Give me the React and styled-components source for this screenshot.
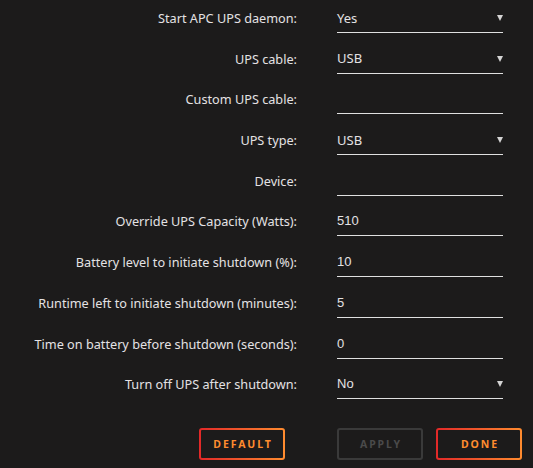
import React from "react";
import styled, { createGlobalStyle } from "styled-components";

const GlobalStyle = createGlobalStyle`
  html, body {
    margin: 0;
    padding: 0;
    background: #1c1b1b;
  }
  body {
    font-family: "Noto Sans", "Open Sans", sans-serif;
    color: #e4e2e4;
  }
`;

const Form = styled.div`
  width: 533px;
  height: 468px;
  padding-top: 4px;
  box-sizing: border-box;
`;

const Row = styled.div`
  display: grid;
  grid-template-columns: 297px 166px;
  column-gap: 40px;
  height: 40.7px;
`;

const Label = styled.div`
  text-align: right;
  font-size: 12.7px;
  line-height: 28px;
  white-space: nowrap;
`;

const Field = styled.div`
  position: relative;
  height: 29px;
  box-sizing: border-box;
  border-bottom: 1px solid #e0e0e0;
  display: flex;
  align-items: center;
  font-size: 13px;
  font-family: ${(p) => (p.$plain ? '"Liberation Sans", Arial, sans-serif' : "inherit")};
  padding-bottom: 1px;
`;

const Arrow = styled.span`
  position: absolute;
  right: 0;
  top: 11px;
  width: 0;
  height: 0;
  border-left: 3px solid transparent;
  border-right: 3px solid transparent;
  border-top: 6px solid #d4d4d4;
`;

const Buttons = styled.div`
  display: grid;
  grid-template-columns: 285px auto;
  column-gap: 52px;
  margin-top: 17px;
`;

const Group = styled.div`
  display: flex;
  justify-content: ${(p) => (p.$end ? "flex-end" : "flex-start")};
  gap: 13px;
`;

const Button = styled.button`
  width: 86px;
  height: 32px;
  box-sizing: border-box;
  border-radius: 3px;
  border: 2px solid transparent;
  background: ${(p) =>
    p.disabled
      ? "linear-gradient(#1c1b1b, #1c1b1b) padding-box, linear-gradient(#3a3a3a, #3a3a3a) border-box"
      : "linear-gradient(#1c1b1b, #1c1b1b) padding-box, linear-gradient(90deg, #e22828, #ff8c2f) border-box"};
  color: ${(p) => (p.disabled ? "#4a4a4a" : "#ff8c2f")};
  font-family: "Noto Sans", sans-serif;
  font-weight: 700;
  font-size: 10.5px;
  letter-spacing: 1.9px;
  text-transform: uppercase;
  padding: 0 0 0 2px;
  cursor: pointer;
`;

const rows = [
  { label: "Start APC UPS daemon:", value: "Yes", select: true },
  { label: "UPS cable:", value: "USB", select: true },
  { label: "Custom UPS cable:", value: "" },
  { label: "UPS type:", value: "USB", select: true },
  { label: "Device:", value: "" },
  { label: "Override UPS Capacity (Watts):", value: "510", plain: true },
  { label: "Battery level to initiate shutdown (%):", value: "10", plain: true },
  { label: "Runtime left to initiate shutdown (minutes):", value: "5", plain: true },
  { label: "Time on battery before shutdown (seconds):", value: "0", plain: true },
  { label: "Turn off UPS after shutdown:", value: "No", select: true, plain: true },
];

export default function App() {
  return (
    <>
      <GlobalStyle />
      <Form>
        {rows.map((r) => (
          <Row key={r.label}>
            <Label>{r.label}</Label>
            <Field $plain={r.plain}>
              {r.value}
              {r.select && <Arrow />}
            </Field>
          </Row>
        ))}
        <Buttons>
          <Group $end>
            <Button>Default</Button>
          </Group>
          <Group>
            <Button disabled>Apply</Button>
            <Button>Done</Button>
          </Group>
        </Buttons>
      </Form>
    </>
  );
}
